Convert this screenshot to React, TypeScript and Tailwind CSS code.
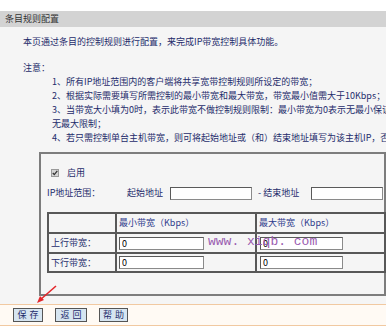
import React from "react"

const lines = [
  "1、所有IP地址范围内的客户端将共享宽带控制规则所设定的带宽；",
  "2、根据实际需要填写所需控制的最小带宽和最大带宽，带宽最小值需大于10Kbps；",
  "3、当带宽大小填为0时，表示此带宽不做控制规则限制：最小带宽为0表示无最小保证；最大带宽为0表示",
  "无最大限制；",
  "4、若只需控制单台主机带宽，则可将起始地址或（和）结束地址填写为该主机IP，否则请留空。",
]

function Field({ w, value = "" }: { w: string; value?: string }) {
  return (
    <input
      readOnly
      value={value}
      className={`${w} h-[13px] bg-white border border-[#8a8a8a] border-t-[#5a5a5a] border-l-[#5a5a5a] px-[2px] text-[9px] leading-[11px] text-black outline-none`}
    />
  )
}

function Btn({ label, w }: { label: string; w: string }) {
  return (
    <div className={`${w} h-[14px] flex items-center justify-center border border-[#555] bg-[#d6e5f1] text-[#1e2c6b] text-[9px] tracking-[3px] pl-[3px]`}>
      {label}
    </div>
  )
}

export default function App() {
  return (
    <div className="relative w-[386px] h-[330px] overflow-hidden bg-white text-[9px] text-[#1e2c6b] font-['Noto_Sans_CJK_SC','Liberation_Sans',sans-serif]">
      <div className="mt-[11px] h-[16px] bg-[#d3d3d3] pl-[5px] leading-[16px] text-[#333]">条目规则配置</div>

      <div className="h-[277px] bg-[#f5f5f5] pt-[8px]">
        <p className="pl-[23px] leading-[14px] whitespace-nowrap">本页通过条目的控制规则进行配置，来完成IP带宽控制具体功能。</p>
        <p className="mt-[12px] pl-[23px] leading-[14px]">注意：</p>
        <div className="pl-[52px] leading-[14px] whitespace-nowrap">
          {lines.map((l) => (
            <div key={l}>{l}</div>
          ))}
        </div>

        <div className="mt-[7px] ml-[39px] border-2 border-[#7d7d7d] pt-[12px] pb-[21px]">
          <div className="flex items-center h-[14px] pl-[10px]">
            <svg width="8" height="8" viewBox="0 0 8 8" className="mr-[8px]">
              <rect x="0.5" y="0.5" width="7" height="7" fill="#d4d4d4" stroke="#9a9a9a" />
              <path d="M1.8 4 L3.3 5.6 L6.3 1.8" fill="none" stroke="#333" strokeWidth="1.3" />
            </svg>
            <span>启用</span>
          </div>

          <div className="mt-[6px] flex items-center h-[14px] pl-[6px] whitespace-nowrap">
            <span className="w-[80px]">IP地址范围：</span>
            <span className="w-[43px]">起始地址</span>
            <Field w="w-[82px]" />
            <span className="ml-[6px] w-[53px]">- 结束地址</span>
            <Field w="w-[72px]" />
          </div>

          <table className="mt-[12px] ml-[6px] border-collapse table-fixed w-[337px]">
            <colgroup>
              <col className="w-[68px]" />
              <col className="w-[140px]" />
              <col className="w-[129px]" />
            </colgroup>
            <tbody>
              <tr>
                <td className="h-[20px] p-0 border-2 border-[#585858]"></td>
                <td className="h-[20px] p-0 pl-[2px] border-2 border-[#585858] text-[#2e3a8c]">最小带宽（Kbps）</td>
                <td className="h-[20px] p-0 pl-[2px] border-2 border-[#585858] text-[#2e3a8c]">最大带宽（Kbps）</td>
              </tr>
              <tr>
                <td className="h-[20px] p-0 pl-[2px] border-2 border-[#585858]">上行带宽：</td>
                <td className="h-[20px] p-0 pl-[2px] border-2 border-[#585858]">
                  <div className="flex"><Field w="w-[85px]" value="0" /></div>
                </td>
                <td className="h-[20px] p-0 pl-[3px] border-2 border-[#585858]">
                  <div className="flex"><Field w="w-[83px]" value="0" /></div>
                </td>
              </tr>
              <tr>
                <td className="h-[19px] p-0 pl-[2px] border-2 border-[#585858]">下行带宽：</td>
                <td className="h-[19px] p-0 pl-[2px] border-2 border-[#585858]">
                  <div className="flex"><Field w="w-[85px]" value="0" /></div>
                </td>
                <td className="h-[19px] p-0 pl-[3px] border-2 border-[#585858]">
                  <div className="flex"><Field w="w-[83px]" value="0" /></div>
                </td>
              </tr>
            </tbody>
          </table>
        </div>
      </div>

      <div className="h-[22px] border-y border-[#f1c9a1] bg-[#fffaf4] flex items-center pl-[13px] gap-[12px]">
        <Btn label="保存" w="w-[30px]" />
        <Btn label="返回" w="w-[32px]" />
        <Btn label="帮助" w="w-[29px]" />
      </div>

      {/* watermark */}
      <div className="absolute left-[208px] top-[235px] w-[134px] text-[13px] leading-[13px] text-[#9a5cb0] font-['Liberation_Mono',monospace] whitespace-nowrap pointer-events-none">
        www. xiqb. com
      </div>

      {/* red arrow */}
      <svg className="absolute left-[30px] top-[280px] pointer-events-none" width="32" height="28" viewBox="0 0 32 28">
        <path d="M26 6 L10 20" stroke="#e3262b" strokeWidth="1.6" fill="none" />
        <path d="M7 23 L10 16 L14 20 Z" fill="#e3262b" />
      </svg>
    </div>
  )
}
